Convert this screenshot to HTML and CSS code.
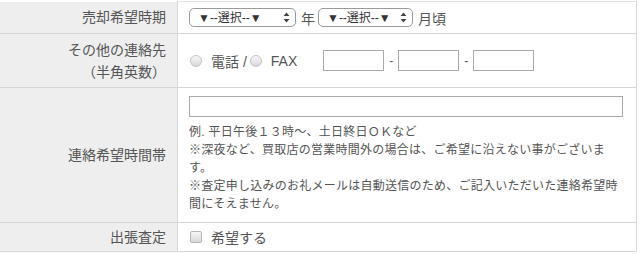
FILE: index.html
```html
<!DOCTYPE html>
<html lang="ja">
<head>
  <meta charset="UTF-8">
  <meta name="viewport" content="width=device-width, initial-scale=1.0">
  <title>お問い合わせ</title>
  <link rel="stylesheet" href="styles.css">
</head>
<body>
  <table class="form-table">
    <tr class="row-period">
      <th>売却希望時期</th>
      <td>
        <div class="inline-group">
          <span class="select-box select-year">
            <select><option>▼--選択--▼</option></select>
            <svg class="updown" width="7" height="11" viewBox="0 0 7 11"><path d="M3.5 0.5 L6.5 4 L0.5 4 Z M3.5 10.5 L6.5 7 L0.5 7 Z" fill="#444"/></svg>
          </span>
          <span class="unit">年</span>
          <span class="select-box select-month">
            <select><option>▼--選択--▼</option></select>
            <svg class="updown" width="7" height="11" viewBox="0 0 7 11"><path d="M3.5 0.5 L6.5 4 L0.5 4 Z M3.5 10.5 L6.5 7 L0.5 7 Z" fill="#444"/></svg>
          </span>
          <span class="unit">月頃</span>
        </div>
      </td>
    </tr>
    <tr class="row-contact">
      <th>その他の連絡先<br>（半角英数）</th>
      <td>
        <div class="inline-group">
          <label class="choice"><input type="radio" name="contact"> 電話 /</label>
          <label class="choice fax"><input type="radio" name="contact"> FAX</label>
          <input type="text" class="tel">
          <span class="dash">-</span>
          <input type="text" class="tel">
          <span class="dash">-</span>
          <input type="text" class="tel">
        </div>
      </td>
    </tr>
    <tr class="row-time">
      <th>連絡希望時間帯</th>
      <td>
        <input type="text" class="wide">
        <p class="note">例. 平日午後１３時〜、土日終日ＯＫなど<br>※深夜など、買取店の営業時間外の場合は、ご希望に沿えない事がございます。<br>※査定申し込みのお礼メールは自動送信のため、ご記入いただいた連絡希望時間にそえません。</p>
      </td>
    </tr>
    <tr class="row-visit">
      <th>出張査定</th>
      <td>
        <label class="choice"><input type="checkbox"> 希望する</label>
      </td>
    </tr>
  </table>
</body>
</html>
```

FILE: styles.css
```css
* {
  box-sizing: border-box;
  margin: 0;
  padding: 0;
}

body {
  font-family: "Liberation Sans", "Noto Sans CJK JP", sans-serif;
  background: #fff;
  color: #555;
  padding-top: 1px;
}

.form-table {
  width: 637px;
  border-collapse: collapse;
}

.form-table th,
.form-table td {
  border: 1px solid #d6d6d6;
  vertical-align: middle;
}

.form-table th {
  width: 178px;
  background: #eeeeee;
  border-left: none;
  border-top: none;
  text-align: right;
  font-weight: normal;
  font-size: 14px;
  line-height: 22px;
  padding: 0 11px 0 0;
  color: #555;
}

.form-table td {
  padding: 0 11px;
  font-size: 14px;
}

.form-table tr:first-child td {
  border-top-color: #e2e2e2;
}

.row-period th,
.row-period td { height: 32px; }

.row-contact th,
.row-contact td { height: 54px; }

.row-time td {
  height: 134px;
  padding-top: 8px;
  padding-bottom: 9px;
}

.row-visit th,
.row-visit td { height: 29px; }

.inline-group {
  display: flex;
  align-items: center;
}

.select-box {
  display: inline-flex;
  align-items: center;
  height: 19px;
  border: 1px solid #9a9a9a;
  border-radius: 5px;
  background: #fff;
  padding: 0 5px 0 8px;
}

.select-box select {
  appearance: none;
  -webkit-appearance: none;
  border: none;
  background: transparent;
  font-family: inherit;
  font-size: 12px;
  color: #333;
  outline: none;
  flex: 1;
}

.select-year { width: 107px; }
.select-month { width: 95px; }

.updown { flex: none; }

.unit {
  font-size: 14px;
  margin: 0 3px 0 5px;
  color: #555;
}

.choice {
  display: inline-flex;
  align-items: center;
  font-size: 14px;
  color: #555;
  gap: 9px;
}

.choice input {
  appearance: none;
  -webkit-appearance: none;
  width: 12px;
  height: 12px;
  border: 1px solid #c4c4c4;
  background: linear-gradient(#f7f7f7, #d8d8d8);
  margin-left: 1px;
}

.choice input[type="radio"] { border-radius: 50%; }
.choice input[type="checkbox"] {
  border-radius: 2px;
  border-color: #b8b8b8;
}

.choice.fax {
  margin-left: 2px;
  margin-right: 26px;
}

.tel {
  width: 61px;
  height: 21px;
  border: 1px solid #a9a9a9;
  background: #fff;
}

.dash {
  font-size: 12px;
  margin: 0 5px;
  color: #555;
}

.wide {
  display: block;
  width: 434px;
  height: 21px;
  border: 1px solid #a9a9a9;
  background: #fff;
}

.note {
  margin-top: 6px;
  font-size: 12px;
  letter-spacing: 0.25px;
  line-height: 18px;
  color: #555;
  width: 436px;
}
```
